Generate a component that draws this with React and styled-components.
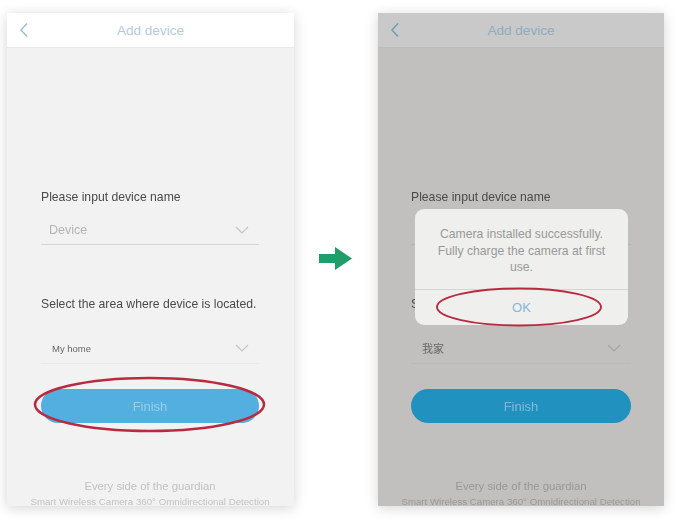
import styled, { createGlobalStyle } from 'styled-components'

const GlobalStyle = createGlobalStyle`
    html, body {
        margin: 0;
        padding: 0;
        background: #fff;
    }

    body {
        font-family: "Liberation Sans", "Noto Sans CJK SC", sans-serif;
    }
`

const Page = styled.div`
    width: 680px;
    height: 523px;
    overflow: hidden;
    box-sizing: border-box;
    padding: 13px 0 0 7px;
    display: flex;
    align-items: flex-start;
`

const Frame = styled.div`
    position: relative;
    flex: none;
`

const Phone = styled.div`
    position: relative;
    width: ${(p) => (p.$dim ? 286 : 287)}px;
    height: 493px;
    overflow: hidden;
    display: flex;
    flex-direction: column;
    background: ${(p) => (p.$dim ? '#c1c0bf' : '#f2f2f2')};
    box-shadow: 0 2px 12px rgba(0, 0, 0, 0.17);
    filter: blur(0.5px);
`

const Header = styled.div`
    position: relative;
    flex: none;
    height: 34px;
    display: flex;
    align-items: center;
    justify-content: center;
    font-size: 13.5px;
    color: ${(p) => (p.$dim ? '#8fabc0' : '#b5cbdc')};
    background: ${(p) => (p.$dim ? '#c9c9c9' : '#fff')};
    border-bottom: 1px solid ${(p) => (p.$dim ? '#bcbcbb' : '#e9e9e9')};
`

const Back = styled.svg`
    position: absolute;
    left: 12px;
    top: 9px;
    width: 10px;
    height: 16px;
    fill: none;
    stroke: ${(p) => (p.$dim ? '#6f9fb5' : '#9dc1d6')};
    stroke-width: 1.5;
`

const Body = styled.div`
    flex: 1;
    padding: 141px ${(p) => (p.$dim ? 33 : 35)}px 0 ${(p) => (p.$dim ? 33 : 34)}px;
    display: flex;
    flex-direction: column;
`

const Label = styled.div`
    margin-top: ${(p) => p.$mt || 0}px;
    font-size: 12.2px;
    line-height: 16px;
    color: #4a4a4a;
    white-space: nowrap;
`

const Field = styled.div`
    height: ${(p) => p.$h}px;
    box-sizing: border-box;
    padding: ${(p) => p.$pt}px 10px 0 ${(p) => p.$pl}px;
    display: flex;
    align-items: center;
    justify-content: space-between;
    border-bottom: 1px solid ${(p) => p.$line};
`

const Value = styled.span`
    font-size: ${(p) => p.$size}px;
    color: ${(p) => p.$color};
`

const Chevron = styled.svg`
    width: 14px;
    height: 8px;
    fill: none;
    stroke: ${(p) => (p.$dim ? '#a3a3a3' : '#c4c4c4')};
    stroke-width: 1.2;
`

const FinishButton = styled.div`
    height: 34px;
    margin-top: 25px;
    border-radius: 17px;
    display: flex;
    align-items: center;
    justify-content: center;
    font-size: 13px;
    color: ${(p) => (p.$dim ? '#7dbcd8' : '#97cfe9')};
    background: ${(p) => (p.$dim ? '#2191c0' : '#52afe0')};
`

const Footer = styled.div`
    margin: 56px -20px 0;
    text-align: center;
    white-space: nowrap;
    color: ${(p) => (p.$dim ? '#989898' : '#c2c2c2')};
`

const Tagline = styled.div`
    font-size: 11.3px;
    line-height: 15px;
`

const Subline = styled.div`
    font-size: 9.7px;
    line-height: 16px;
`

const Dialog = styled.div`
    position: absolute;
    left: 37px;
    top: 196px;
    width: 213px;
    height: 116px;
    border-radius: 9px;
    background: #efefee;
    display: flex;
    flex-direction: column;
    z-index: 1;
`

const Message = styled.div`
    height: 81px;
    box-sizing: border-box;
    padding: 17px 16px 0;
    text-align: center;
    font-size: 12.2px;
    line-height: 16.5px;
    color: #999;
    border-bottom: 1px solid #d4d4d4;
`

const OkButton = styled.div`
    flex: 1;
    display: flex;
    align-items: center;
    justify-content: center;
    font-size: 13px;
    color: #86b9d6;
`

const ArrowSlot = styled.div`
    flex: none;
    width: 84px;
    height: 258px;
    padding-left: 25px;
    box-sizing: border-box;
    display: flex;
    align-items: flex-end;
`

const Ring = styled.svg`
    position: absolute;
    left: ${(p) => p.$x}px;
    top: ${(p) => p.$y}px;
    width: ${(p) => p.$w}px;
    height: ${(p) => p.$h}px;
    fill: none;
    stroke: #b92a3f;
    stroke-width: ${(p) => p.$sw};
    z-index: 2;
`

const DeviceForm = ({ dim, area, areaSize }) => (
    <Body $dim={dim}>
        <Label>Please input device name</Label>
        <Field $h={40} $pt={11} $pl={8} $line={dim ? '#b4b4b4' : '#d6d6d6'}>
            <Value $size={12.5} $color={dim ? '#a5a5a5' : '#b4b4b4'}>Device</Value>
            <Chevron $dim={dim} viewBox="0 0 14 8"><path d="M1 1l6 6 6-6" /></Chevron>
        </Field>
        <Label $mt={51}>Select the area where device is located.</Label>
        <Field $h={52} $pt={21} $pl={11} $line={dim ? '#bababa' : '#ebebeb'}>
            <Value $size={areaSize} $color="#666">{area}</Value>
            <Chevron $dim={dim} viewBox="0 0 14 8"><path d="M1 1l6 6 6-6" /></Chevron>
        </Field>
        <FinishButton $dim={dim}>Finish</FinishButton>
        <Footer $dim={dim}>
            <Tagline>Every side of the guardian</Tagline>
            <Subline>Smart Wireless Camera 360° Omnidirectional Detection</Subline>
        </Footer>
    </Body>
)

const BackIcon = ({ dim }) => (
    <Back $dim={dim} viewBox="0 0 10 16"><path d="M8 1.5L2 8l6 6.5" /></Back>
)

const App = () => {
    return (
        <>
            <GlobalStyle />
            <Page>
                <Frame>
                    <Phone>
                        <Header>
                            <BackIcon />
                            Add device
                        </Header>
                        <DeviceForm area="My home" areaSize={9.5} />
                    </Phone>
                    <Ring $x={26} $y={363} $w={233} $h={57} $sw={2.5} viewBox="0 0 233 57">
                        <ellipse cx="116.5" cy="28.5" rx="114.5" ry="26.5" />
                    </Ring>
                </Frame>
                <ArrowSlot>
                    <svg width="34" height="24" viewBox="0 0 34 24">
                        <path d="M0 7h16V0l17 11.5L16 23v-7H0z" fill="#1f9e6b" />
                    </svg>
                </ArrowSlot>
                <Frame>
                    <Phone $dim>
                        <Header $dim>
                            <BackIcon dim />
                            Add device
                        </Header>
                        <DeviceForm dim area="我家" areaSize={11} />
                        <Dialog>
                            <Message>Camera installed successfully. Fully charge the camera at first use.</Message>
                            <OkButton>OK</OkButton>
                        </Dialog>
                    </Phone>
                    <Ring $x={57} $y={274} $w={168} $h={40} $sw={1.9} viewBox="0 0 168 40">
                        <ellipse cx="84" cy="20" rx="82" ry="18.5" />
                    </Ring>
                </Frame>
            </Page>
        </>
    )
}

export default App
